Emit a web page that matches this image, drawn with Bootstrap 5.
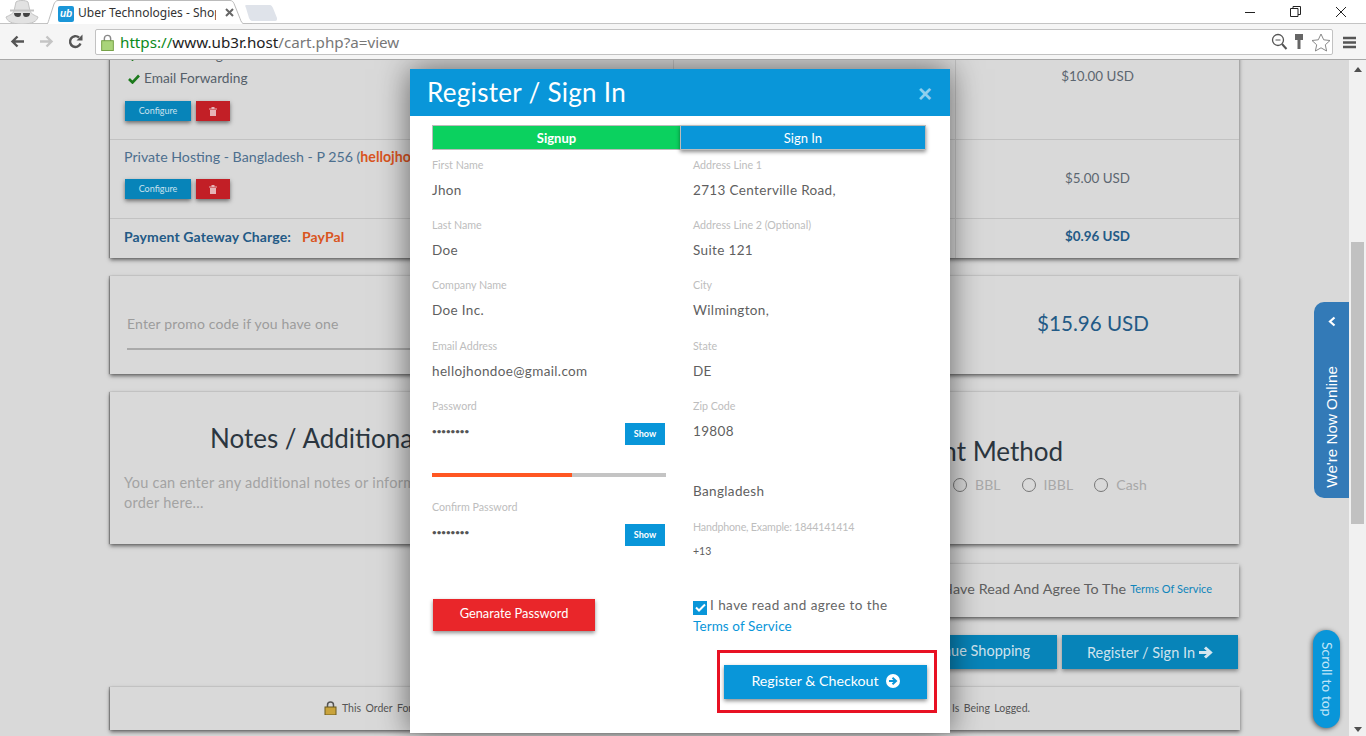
<!DOCTYPE html>
<html lang="en">
<head>
<meta charset="utf-8">
<title>Uber Technologies - Shopping Cart</title>
<link rel="stylesheet" href="https://cdn.jsdelivr.net/npm/bootstrap@5.3.0/dist/css/bootstrap.min.css">
<style>
html,body{height:736px;overflow:hidden;margin:0;background:#d9d9d9;font-family:"Lato","Noto Sans",sans-serif;color:#55606a;font-size:14px}
/* browser chrome */
.tabstrip{height:24px;background:#fff;position:relative;border-bottom:1px solid #c4c4c4}
.spy{position:absolute;left:4px;top:0}
.br-tab{position:absolute;left:42px;top:0;width:210px;height:25px}
.tab-shape{position:absolute;left:0;top:0}
.fav{position:absolute;left:16px;top:6px;width:16px;height:16px;background:#1a96d8;border-radius:2px;color:#fff;font:italic 700 10px/16px "Liberation Sans",sans-serif;text-align:center}
.tab-ttl{position:absolute;left:36px;top:5px;width:138px;overflow:hidden;white-space:nowrap;font:12px/16px "Noto Sans",sans-serif;color:#333}
.tab-x{position:absolute;left:183px;top:8px}
.newtab{position:absolute;left:245px;top:5px}
.winbtn{position:absolute;top:5px}
.toolbar{height:36px;background:#f5f5f5;border-bottom:1px solid #a8a8a8;padding:5px 0 4px 95px;position:relative}
.navico{position:absolute;top:10px}
.omni{width:1238px;height:26px;background:#fff;border:1px solid #c2c2c2;border-radius:2px;display:flex;align-items:center;padding-left:5px;position:relative}
.url{font:15.2px/24px "Noto Sans",sans-serif;color:#777;margin-left:6px;white-space:nowrap}
.url b{font-weight:400;color:#0b8a1c}.url i{font-style:normal;color:#222}
.omni-ico{position:absolute;top:3px}
/* viewport */
.vport{display:flex;height:676px;position:relative;overflow:hidden}
.pagearea{flex:1 1 auto;overflow:hidden;position:relative}
.sbar{width:17px;background:#f1f1f1;position:relative;flex:none}
.sbar-thumb{position:absolute;left:2px;top:182px;width:13px;height:282px;background:#c1c1c1}
.sbar-up,.sbar-dn{position:absolute;left:5px;width:0;height:0;border-left:4px solid transparent;border-right:4px solid transparent}
.sbar-up{top:7px;border-bottom:5px solid #505050}.sbar-dn{top:667px;border-top:5px solid #505050}
.pgcol{width:1129px;margin:-47px 0 0 110px}
.sheet{background:#d9d9d9;box-shadow:0 2px 4px rgba(0,0,0,.55),-1px 0 1px rgba(0,0,0,.25)}
.ordgrid{display:grid;grid-template-columns:564px 282px 1fr}
.cellb{border-right:1px solid #c2c2c2;border-bottom:1px solid #c2c2c2}
.r1{height:127px;padding:30px 14px 0 14px}
.r2{height:79px;padding:6px 14px 0 14px}
.r1 .mini-row{margin-top:12px}
.cell-last{border-right:0}
.price{display:flex;align-items:center;justify-content:center;font-size:13.4px;color:#5c6670;padding-top:1px}
.price-b{padding:0 0 2px}
.hline{line-height:23px;padding-left:4px;white-space:nowrap;font-size:13.7px;color:#55606a}
.hline svg{margin-right:4px;vertical-align:-1px}
.blue-t{color:#4d6f8e;font-size:14.2px;line-height:22px;white-space:nowrap}
.or-t{color:#d9551f;font-weight:700}
.mini-row{display:flex;gap:5px;margin:11px 0 0 1px}
.btn-conf,.btn-del{height:20px;border-radius:0;border:0;padding:0;box-shadow:0 2px 4px rgba(0,0,0,.5);display:flex;align-items:center;justify-content:center;font-size:9px;color:#c9e2ee}
.btn-conf{width:66px;background:#0784b9}
.btn-del{width:34px;background:#c21f26}
.r3{height:39px;display:flex;align-items:center;padding:0 0 5px 14px;font-weight:700;color:#235a86;font-size:14px;letter-spacing:.12px;border-right:1px solid #c2c2c2}
.r3 span{color:#d9551f;margin-left:11px}
.r3p{display:flex;align-items:center;justify-content:center;font-weight:700;color:#235a86;font-size:13.4px;padding-bottom:5px}
.promo{height:98px;margin-top:18px;display:flex}
.promo-l{width:564px;padding:36px 0 0 17px}
.promo-f{width:547px;border-bottom:2px solid #aaa;height:38px;color:#9c9c9c;font-size:14px;line-height:23px;letter-spacing:.15px}
.promo-r{width:282px;margin-left:282px;display:flex;align-items:center;justify-content:center;font-size:20.6px;color:#235a86;padding:0 8px 4px 0}
.notes{height:152px;margin-top:18px;display:flex}
.notes-l{width:564px;padding:30px 14px 0 100px;position:relative}
.h26{font-size:26px;line-height:32px;color:#2b3640;white-space:nowrap}
.np{margin:19px 0 0 -86px;width:530px;color:#a3a3a3;font-size:14.5px;line-height:20px;letter-spacing:.25px}
.notes-r{flex:1;padding:43px 0 0 192px}
.radios{display:flex;margin:7px 0 0 87px;color:#a8a8a8;font-size:14px;letter-spacing:.1px}
.radios span{display:flex;align-items:center;gap:8px}
.radios span+span{margin-left:21px}
.radios span::before{content:"";width:14px;height:14px;border:1px solid #777;border-radius:50%}
.tos-wrap{display:flex;justify-content:flex-end;margin-top:20px}
.tos{width:620px;height:53px;display:flex;align-items:center;justify-content:flex-end;padding:0 27px 3px 0;font-size:14.3px;letter-spacing:.1px;color:#606060;white-space:nowrap}
.tos a{font-size:11px;letter-spacing:0;color:#0f85bb;text-decoration:none;margin-left:4px}
.act-row{display:flex;justify-content:flex-end;gap:5px;margin-top:18px;padding-right:1px}
.btn-act{height:34px;border-radius:0;border:0;background:#0784b9;color:#cfe3ee;font-size:14.5px;box-shadow:0 2px 4px rgba(0,0,0,.4);display:flex;align-items:center;justify-content:center;gap:3px}
.ba1{width:300px;padding:0 27px 3px 0;justify-content:flex-end}
.ba2{width:176px;padding:1px 0 0}
.foot{height:43px;margin-top:18px;width:1130px;display:flex;align-items:center;justify-content:flex-start;font-size:10.5px;color:#555;gap:5px;padding:0 0 2px 214px}
.foot-t{width:688px;display:block;white-space:nowrap;text-align:justify;text-align-last:justify;line-height:14px}
/* dialog */
.dlgbox{position:absolute;left:410px;top:9px;width:540px;height:664px;border:0;border-radius:0;box-shadow:0 0 30px rgba(0,0,0,.55);background:#fff}
.dlghead{height:47px;background:#0996d9;border:0;border-radius:0;padding:0 18px 2px;display:flex;align-items:center;justify-content:space-between}
.dlgttl{color:#fff;font-size:26px;line-height:32px;font-weight:400;letter-spacing:.3px;margin-left:-1px}
.dlgx{color:#8fd0ee;font:700 24px/24px "Liberation Sans",sans-serif;margin-top:5px}
.dlgbody{padding:9px 24px 0 22px}
.swtabs{display:flex;height:25px}
.swtabs div{display:flex;align-items:center;justify-content:center;color:#fff;font-size:13px;padding-top:2px}
.sw-a{width:248px;background:#0bd15f;font-weight:700;border:1px solid #bbb;border-right:0}
.sw-b{width:246px;background:#0996d9;border:1px solid #bbb;box-shadow:0 2px 4px rgba(0,0,0,.45)}
.cols{display:flex;margin-top:5px}
.colL{width:261px;flex:none;position:relative}
.colR{flex:1}
.fld{height:60.2px;position:relative}
.lbl{font-size:10.7px;line-height:20px;color:#bdbdbd;white-space:nowrap}
.lbl-t{letter-spacing:-.2px;padding-top:1px}
.val{font-size:13.5px;line-height:20px;margin-top:5px;color:#5f5f5f;letter-spacing:.35px;white-space:nowrap}
.val-sm{font-size:10.5px;margin-top:4px;letter-spacing:0}
.dots{font-size:8px;font-weight:700;letter-spacing:0;line-height:20px;margin-top:5px;color:#555}
.btn-show{position:absolute;left:193px;top:27px;width:40px;height:22px;background:#0996d9;color:#fff;border:0;border-radius:0;padding:0;font-size:9px;font-weight:700;line-height:22px}
.pbar{height:41px;padding-top:17px;width:234px}
.pbar .progress{height:4px;border-radius:0;background:#c4c4c4}
.pbar .progress-bar{background:#ff5722}
.btn-gen{display:block;width:162px;height:32px;margin:42px 0 0 1px;background:#e9262a;color:#fff;border:0;border-radius:0;padding:0 0 4px;font-size:12.8px;box-shadow:0 2px 4px rgba(0,0,0,.45)}
.agree{margin-top:19px;font-size:13.5px;line-height:21px;color:#666;letter-spacing:.45px;white-space:nowrap}
.cbx{display:inline-flex;width:14px;height:14px;background:#0996d9;vertical-align:-2px;margin-right:3px;align-items:center;justify-content:center}
.agree a{color:#0996d9;text-decoration:none;letter-spacing:.1px}
.redbox{position:absolute;left:307px;top:581px;width:220px;height:63px;border:3px solid #e81123;display:flex;align-items:center;justify-content:flex-end;padding-right:7px}
.btn-reg{width:203px;height:34px;background:#0996d9;color:#fff;border:0;border-radius:0;padding:0 0 2px;font-size:14.2px;box-shadow:0 2px 4px rgba(0,0,0,.45);display:flex;align-items:center;justify-content:center;gap:7px}
/* floaters */
.chat-tab{position:absolute;left:1314px;top:242px;width:35px;height:196px;background:#337ab7;border-radius:10px 0 0 10px;color:#fff;display:flex;flex-direction:column;align-items:center}
.chat-tab svg{margin-top:14px}
.chat-t{writing-mode:vertical-rl;transform:rotate(180deg);font:15.2px/18px "Liberation Sans",sans-serif;margin-top:39px;white-space:nowrap}
.scrolltop{position:absolute;left:1313px;top:570px;width:27px;height:98px;background:#0996d9;border-radius:14px;box-shadow:-1px 1px 5px rgba(0,0,0,.6);color:#bfe4f7;display:flex;align-items:center;justify-content:center}
.scrolltop span{writing-mode:vertical-rl;font-size:14px;white-space:nowrap;padding-left:1px}
</style>
</head>
<body>
<div class="tabstrip">
  <svg class="spy" width="36" height="24" viewBox="0 0 36 24"><path d="M2 17c4-2 7-3 8-6l2-9c2-2 10-2 12 0l2 9c1 3 4 4 8 6-1 4-5 7-16 7S3 21 2 17z" fill="#e2e2e2" stroke="#c4c4c4"/><path d="M6 10.500h24" stroke="#c4c4c4" stroke-width="2"/><path d="M10 13h7c0 3-1 4-3 4s-4-1-4-4zm9 0h7c0 3-2 4-4 4s-3-1-3-4z" fill="#444"/></svg>
  <div class="br-tab">
    <svg class="tab-shape" width="210" height="25" viewBox="0 0 210 25"><path d="M0 24.500h3c3 0 3-2 4-5L12 4c1-2 2-3.500 4-3.500h172c2 0 3 1 4 3l6 15c1 3 2 5.500 5 5.500h7" fill="#fff" stroke="#bbb"/></svg>
    <div class="fav">ub</div>
    <div class="tab-ttl">Uber Technologies - Shop</div>
    <svg class="tab-x" width="9" height="9" viewBox="0 0 9 9"><path d="M1 1l7 7M8 1L1 8" stroke="#666" stroke-width="2"/></svg>
  </div>
  <svg class="newtab" width="33" height="16" viewBox="0 0 33 16"><path d="M1 0h24c1 0 2 1 3 3l4 10c0 2 0 3-2 3H7c-1 0-2-1-3-3L1 3C0 1 0 0 1 0z" fill="#dfe3ea"/></svg>
  <svg class="winbtn" style="left:1245px" width="11" height="14" viewBox="0 0 11 14"><path d="M0 7.500h10" stroke="#222"/></svg>
  <svg class="winbtn" style="left:1290px" width="11" height="14" viewBox="0 0 11 14"><path d="M.5 3.500h7.500v8H.5zM3 3.500V1.500h7.500v8H8" fill="none" stroke="#222"/></svg>
  <svg class="winbtn" style="left:1335px" width="12" height="14" viewBox="0 0 12 14"><path d="M1 2l10 10M11 2L1 12" stroke="#222"/></svg>
</div>
<div class="toolbar">
  <svg class="navico" style="left:10px" width="15" height="15" viewBox="0 0 15 15"><path d="M14 7.500H3M7.500 2.500l-5 5 5 5" fill="none" stroke="#555" stroke-width="2.400"/></svg>
  <svg class="navico" style="left:39px" width="15" height="15" viewBox="0 0 15 15"><path d="M1 7.500h11M7.500 2.500l5 5-5 5" fill="none" stroke="#c4c4c4" stroke-width="2.400"/></svg>
  <svg class="navico" style="left:68px" width="15" height="15" viewBox="0 0 15 15"><path d="M12.500 9.500A5.400 5.400 0 1 1 11 3.500" fill="none" stroke="#555" stroke-width="2.400"/><path d="M8.500 6.500h6v-6z" fill="#555"/></svg>
  <div class="omni">
    <svg width="13" height="17" viewBox="0 0 14 19"><path d="M3.500 8V5a3.500 3.500 0 0 1 7 0v3" fill="none" stroke="#888" stroke-width="1.600"/><rect x=".5" y="7.500" width="13" height="11" fill="#a9d47a" stroke="#6c9a3c"/></svg>
    <div class="url"><b>https://</b><i>www.ub3r.host</i>/cart.php?a=view</div>
    <svg class="omni-ico" style="left:1175px" width="17" height="18" viewBox="0 0 17 18"><circle cx="7" cy="7" r="5.500" fill="none" stroke="#555" stroke-width="1.300"/><path d="M4.500 7h5" stroke="#555"/><path d="M11 11l4.500 5" stroke="#555" stroke-width="2"/></svg>
    <svg class="omni-ico" style="left:1197px" width="12" height="18" viewBox="0 0 12 18"><path d="M2 1h8v6H7.500v9h-3V7H2z" fill="#666"/></svg>
    <svg class="omni-ico" style="left:1215px" width="20" height="19" viewBox="0 0 20 19"><path d="M10 1l2.700 5.800 6.300.7-4.700 4.300 1.300 6.200-5.600-3.200-5.600 3.200 1.300-6.200L1 7.500l6.300-.7z" fill="#fff" stroke="#888"/></svg>
  </div>
  <svg class="navico" style="left:1343px;top:12px" width="13" height="13" viewBox="0 0 13 13"><path d="M0 2h13M0 6.500h13M0 11h13" stroke="#555" stroke-width="2.400"/></svg>
</div>
<div class="vport">
  <div class="pagearea">
    <div class="pgcol">
      <div class="sheet ordgrid">
        <div class="cellb r1">
          <div class="hline"><svg width="12" height="10" viewBox="0 0 12 10"><path d="M1 5l3.500 3.500L11 1.500" fill="none" stroke="#1c7a1c" stroke-width="2.600"/></svg>Web Hosting</div>
          <div class="hline"><svg width="12" height="10" viewBox="0 0 12 10"><path d="M1 5l3.500 3.500L11 1.500" fill="none" stroke="#1c7a1c" stroke-width="2.600"/></svg>Email Forwarding</div>
          <div class="mini-row"><button class="btn btn-conf">Configure</button><button class="btn btn-del" aria-label="Delete"><svg width="8" height="9" viewBox="0 0 8 9"><path d="M0 1.500h8V2.500H0zM2.500 0h3v1.500h-3zM1 3h6v6H1z" fill="#e6b3b6"/></svg></button></div>
        </div>
        <div class="cellb"></div>
        <div class="cellb cell-last price">$10.00 USD</div>
        <div class="cellb r2">
          <div class="blue-t">Private Hosting - Bangladesh - P 256 (<span class="or-t">hellojhondoe.com</span>)</div>
          <div class="mini-row"><button class="btn btn-conf">Configure</button><button class="btn btn-del" aria-label="Delete"><svg width="8" height="9" viewBox="0 0 8 9"><path d="M0 1.500h8V2.500H0zM2.500 0h3v1.500h-3zM1 3h6v6H1z" fill="#e6b3b6"/></svg></button></div>
        </div>
        <div class="cellb"></div>
        <div class="cellb cell-last price price-b">$5.00 USD</div>
        <div class="r3">Payment Gateway Charge: <span>PayPal</span></div>
        <div class="r3" style="padding:0"></div>
        <div class="r3p">$0.96 USD</div>
      </div>
      <div class="sheet promo">
        <div class="promo-l"><div class="promo-f">Enter promo code if you have one</div></div>
        <div class="promo-r">$15.96 USD</div>
      </div>
      <div class="sheet notes">
        <div class="notes-l">
          <div class="h26">Notes / Additional Information</div>
          <p class="np">You can enter any additional notes or information you want included with your order here...</p>
        </div>
        <div class="notes-r">
          <div class="h26">Payment Method</div>
          <div class="radios"><span>BBL</span><span>IBBL</span><span>Cash</span></div>
        </div>
      </div>
      <div class="tos-wrap"><div class="sheet tos">I Have Read And Agree To The <a href="#">Terms Of Service</a></div></div>
      <div class="act-row">
        <button class="btn btn-act ba1">Continue Shopping</button>
        <button class="btn btn-act ba2">Register / Sign In <svg width="15" height="13" viewBox="0 0 15 13"><path d="M1 6.500h10M7 1.500l5.500 5-5.500 5" fill="none" stroke="#d5e6ef" stroke-width="3"/></svg></button>
      </div>
      <div class="sheet foot">
        <svg width="13" height="14" viewBox="0 0 13 14"><path d="M3.500 6V4a3 3 0 0 1 6 0v2" fill="none" stroke="#555" stroke-width="1.500"/><rect x="1" y="6" width="11" height="8" fill="#c9a33c" stroke="#6b5a1f"/></svg>
        <span class="foot-t">This Order Form Is Protected By SSL Encryption And All Transactions Are Monitored For Your Safety. Your Current IP Address Is Being Logged.</span>
      </div>
    </div>
    <div class="modal-content dlgbox">
      <div class="modal-header dlghead"><h5 class="modal-title dlgttl">Register / Sign In</h5><span class="dlgx">×</span></div>
      <div class="dlgbody">
        <div class="swtabs"><div class="sw-a">Signup</div><div class="sw-b">Sign In</div></div>
        <div class="cols">
          <div class="colL">
            <div class="fld"><div class="lbl">First Name</div><div class="val">Jhon</div></div>
            <div class="fld"><div class="lbl">Last Name</div><div class="val">Doe</div></div>
            <div class="fld"><div class="lbl">Company Name</div><div class="val">Doe Inc.</div></div>
            <div class="fld"><div class="lbl">Email Address</div><div class="val">hellojhondoe@gmail.com</div></div>
            <div class="fld"><div class="lbl">Password</div><div class="dots">••••••••</div><button class="btn btn-show">Show</button></div>
            <div class="pbar"><div class="progress"><div class="progress-bar" style="width:60%"></div></div></div>
            <div class="fld"><div class="lbl">Confirm Password</div><div class="dots">••••••••</div><button class="btn btn-show">Show</button></div>
            <button class="btn btn-gen">Genarate Password</button>
          </div>
          <div class="colR">
            <div class="fld"><div class="lbl">Address Line 1</div><div class="val">2713 Centerville Road,</div></div>
            <div class="fld"><div class="lbl">Address Line 2 (Optional)</div><div class="val">Suite 121</div></div>
            <div class="fld"><div class="lbl">City</div><div class="val">Wilmington,</div></div>
            <div class="fld"><div class="lbl">State</div><div class="val">DE</div></div>
            <div class="fld"><div class="lbl">Zip Code</div><div class="val">19808</div></div>
            <div class="fld"><div class="lbl">&nbsp;</div><div class="val">Bangladesh</div></div>
            <div class="fld"><div class="lbl lbl-t">Handphone, Example: 1844141414</div><div class="val val-sm">+13</div></div>
            <div class="agree"><span class="cbx"><svg width="11" height="9" viewBox="0 0 11 9"><path d="M1 4.500l3 3 6-6" fill="none" stroke="#fff" stroke-width="2"/></svg></span>I have read and agree to the<br><a href="#">Terms of Service</a></div>
          </div>
        </div>
      </div>
      <div class="redbox"><button class="btn btn-reg">Register &amp; Checkout <svg width="14" height="14" viewBox="0 0 14 14"><circle cx="7" cy="7" r="7" fill="#fff"/><path d="M3 7h6M6.500 3.800L10 7l-3.500 3.200" fill="none" stroke="#0996d9" stroke-width="2"/></svg></button></div>
    </div>
    <div class="chat-tab"><svg width="10" height="11" viewBox="0 0 10 11"><path d="M7.500 1.500L3 5.500l4.500 4" fill="none" stroke="#fff" stroke-width="2.200"/></svg><div class="chat-t">We're Now Online</div></div>
    <div class="scrolltop"><span>Scroll to top</span></div>
  </div>
  <div class="sbar"><div class="sbar-up"></div><div class="sbar-thumb"></div><div class="sbar-dn"></div></div>
</div>
<script src="https://cdn.jsdelivr.net/npm/bootstrap@5.3.0/dist/js/bootstrap.bundle.min.js"></script>
</body>
</html>
